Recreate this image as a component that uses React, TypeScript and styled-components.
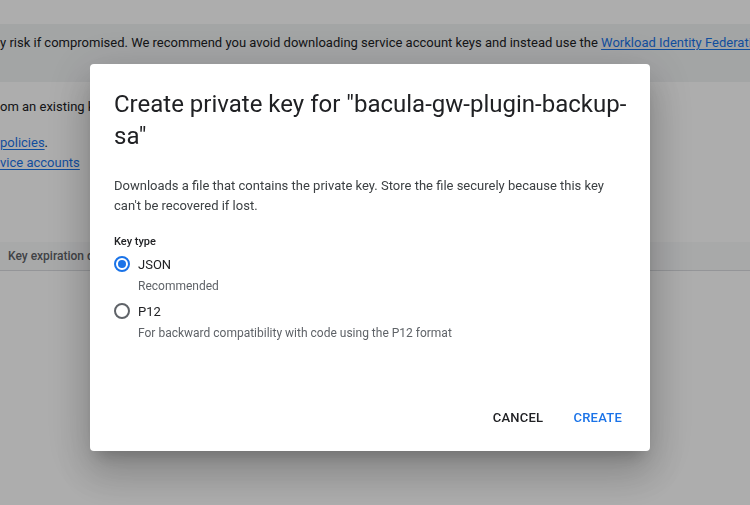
import React, { useState } from "react";
import styled, { createGlobalStyle } from "styled-components";

const GlobalStyle = createGlobalStyle`
  html, body {
    margin: 0;
    padding: 0;
    background: #ffffff;
    font-family: Roboto, "Noto Sans", Arial, sans-serif;
    overflow: hidden;
  }
`;

type KeyType = "json" | "p12";

const options: { id: KeyType; label: string; hint: string }[] = [
  { id: "json", label: "JSON", hint: "Recommended" },
  { id: "p12", label: "P12", hint: "For backward compatibility with code using the P12 format" },
];

const App = () => {
  const [keyType, setKeyType] = useState<KeyType>("json");

  return (
    <>
      <GlobalStyle />
      <Page>
        <Banner>
          y risk if compromised. We recommend you avoid downloading service account keys and
          instead use the <Link href="#">Workload Identity Federation</Link>
        </Banner>
        <Section>
          <Line>om an existing key, or create a new key.</Line>
          <Spacer />
          <Line>
            <Link href="#">policies</Link>.
          </Line>
          <Line>
            <Link href="#">vice accounts</Link>
          </Line>
        </Section>
        <TableHeader>
          <HeaderCell>Key expiration date</HeaderCell>
        </TableHeader>
      </Page>

      <Overlay>
        <Dialog role="dialog">
          <Title>Create private key for "bacula-gw-plugin-backup-sa"</Title>
          <Body>
            Downloads a file that contains the private key. Store the file securely because this
            key can't be recovered if lost.
          </Body>
          <FieldLabel>Key type</FieldLabel>
          <RadioGroup>
            {options.map((o) => (
              <Option key={o.id} onClick={() => setKeyType(o.id)}>
                <RadioRow>
                  <Radio checked={keyType === o.id} />
                  <RadioLabel>{o.label}</RadioLabel>
                </RadioRow>
                <Hint>{o.hint}</Hint>
              </Option>
            ))}
          </RadioGroup>
          <Actions>
            <Button>Cancel</Button>
            <Button primary>Create</Button>
          </Actions>
        </Dialog>
      </Overlay>
    </>
  );
};

const Page = styled.div`
  padding-top: 24px;
  font-size: 13px;
  line-height: 20px;
  color: #202124;
`;

const Banner = styled.div`
  height: 58px;
  box-sizing: border-box;
  padding: 9px 0 0;
  background: #f1f3f4;
  white-space: nowrap;
  overflow: hidden;
`;

const Link = styled.a`
  color: #1a73e8;
  text-decoration: underline;
  text-underline-offset: 2px;
`;

const Section = styled.div`
  height: 160px;
  box-sizing: border-box;
  padding-top: 15px;
`;

const Line = styled.div`
  white-space: nowrap;
`;

const Spacer = styled.div`
  height: 16px;
`;

const TableHeader = styled.div`
  height: 28px;
  display: flex;
  align-items: center;
  padding-left: 8px;
  background: #f8f9fa;
  border-bottom: 1px solid #dadce0;
`;

const HeaderCell = styled.span`
  font-size: 12px;
  font-weight: 500;
  color: #5f6368;
`;

const Overlay = styled.div`
  position: fixed;
  inset: 0;
  background: rgba(0, 0, 0, 0.32);
  display: flex;
  align-items: center;
  justify-content: center;
  padding: 10px 10px 0 0;
`;

const Dialog = styled.div`
  width: 560px;
  box-sizing: border-box;
  padding: 24px 24px 0;
  background: #ffffff;
  border-radius: 4px;
  box-shadow: 0 11px 15px -7px rgba(0, 0, 0, 0.2), 0 24px 38px 3px rgba(0, 0, 0, 0.14),
    0 9px 46px 8px rgba(0, 0, 0, 0.12);
`;

const Title = styled.h2`
  margin: 0 -6px 0 0;
  font-size: 24px;
  font-weight: 400;
  line-height: 32px;
  color: #202124;
`;

const Body = styled.p`
  margin: 24px 0 0;
  font-size: 13px;
  line-height: 20px;
  color: #3c4043;
`;

const FieldLabel = styled.div`
  margin-top: 18px;
  font-size: 11px;
  font-weight: 500;
  line-height: 16px;
  color: #202124;
`;

const RadioGroup = styled.div`
  display: flex;
  flex-direction: column;
  gap: 4px;
  margin-top: 2px;
`;

const Option = styled.div`
  cursor: pointer;
`;

const RadioRow = styled.div`
  display: flex;
  align-items: center;
  gap: 8px;
  height: 24px;
`;

const Radio = styled.span<{ checked?: boolean }>`
  width: 16px;
  height: 16px;
  box-sizing: border-box;
  border-radius: 50%;
  border: 2px solid ${(p) => (p.checked ? "#1a73e8" : "#5f6368")};
  display: flex;
  align-items: center;
  justify-content: center;

  &::after {
    content: "";
    width: 8px;
    height: 8px;
    border-radius: 50%;
    background: ${(p) => (p.checked ? "#1a73e8" : "transparent")};
  }
`;

const RadioLabel = styled.span`
  font-size: 13px;
  color: #202124;
`;

const Hint = styled.div`
  padding-left: 24px;
  margin-top: 1px;
  font-size: 12px;
  line-height: 18px;
  color: #5f6368;
`;

const Actions = styled.div`
  display: flex;
  justify-content: flex-end;
  gap: 6px;
  margin: 57px -8px 0 0;
  padding-bottom: 16px;
`;

const Button = styled.button<{ primary?: boolean }>`
  height: 36px;
  padding: 0 12px;
  border: none;
  background: transparent;
  font-family: Roboto, Arial, sans-serif;
  font-size: 13px;
  font-weight: 500;
  letter-spacing: 0.25px;
  text-transform: uppercase;
  color: ${(p) => (p.primary ? "#1a73e8" : "#202124")};
  cursor: pointer;
`;

export default App;
